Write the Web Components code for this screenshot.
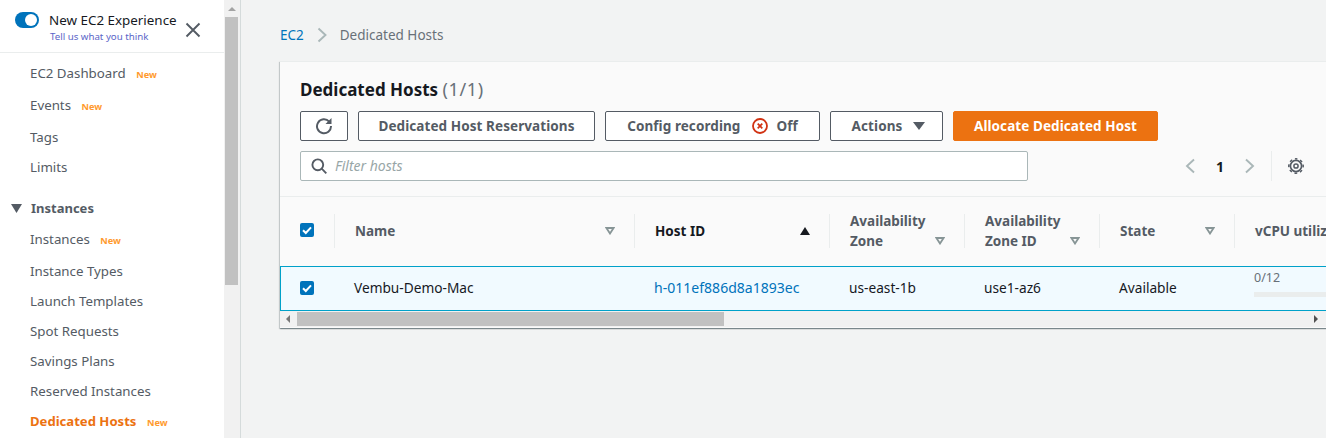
<!DOCTYPE html>
<html lang="en"><head><meta charset="utf-8"><title>Dedicated Hosts</title>
<style>
html,body{margin:0;height:438px;overflow:hidden;background:#f2f3f3;font-family:"Noto Sans","Open Sans",sans-serif;font-size:14px;color:#16191f}
</style></head><body>
<ec2-app>
  <side-nav slot="nav">
    <nav-item h="32" badge>EC2 Dashboard</nav-item>
    <nav-item h="32" badge>Events</nav-item>
    <nav-item h="31">Tags</nav-item>
    <nav-item h="30">Limits</nav-item>
    <nav-group>Instances</nav-group>
    <nav-item h="32" badge>Instances</nav-item>
    <nav-item h="31">Instance Types</nav-item>
    <nav-item h="30">Launch Templates</nav-item>
    <nav-item h="30">Spot Requests</nav-item>
    <nav-item h="30">Savings Plans</nav-item>
    <nav-item h="30">Reserved Instances</nav-item>
    <nav-item h="30" badge active>Dedicated Hosts</nav-item>
  </side-nav>
  <fake-scroll slot="scroll"></fake-scroll>
  <bread-crumb slot="main"></bread-crumb>
  <hosts-card slot="main"></hosts-card>
</ec2-app>
<script>
function def(name, css, html, extra){
  class C extends HTMLElement{
    constructor(){super();const r=this.attachShadow({mode:'open'});r.innerHTML='<style>'+css+'</style>'+(typeof html==='function'?html(this):html);}
    connectedCallback(){if(extra)extra(this);}
  }
  customElements.define(name,C);
}
def('ec2-app',`:host{display:flex;height:438px;overflow:hidden}
.nav{width:224px;flex:none;background:#fff}
.sb{width:16px;flex:none;background:#f1f1f1}
.main{flex:1;min-width:0;border-left:1px solid #d5dbdb;padding:0 0 0 39px;overflow:hidden}`,
`<div class="nav"><slot name="nav"></slot></div><div class="sb"><slot name="scroll"></slot></div><div class="main"><slot name="main"></slot></div>`);

def('side-nav',`:host{display:block}
.top{height:52px;border-bottom:1px solid #eaeded;display:flex;margin-bottom:4px}
.tog{width:24px;height:16px;border-radius:8px;background:#0073bb;margin:12px 0 0 15px;position:relative;flex:none}
.tog i{position:absolute;right:2px;top:2px;width:12px;height:12px;border-radius:50%;background:#fff}
.txt{margin:10px 0 0 10px;width:132px;flex:none}
.t1{font-size:13.4px;line-height:20px;color:#16191f;white-space:nowrap}
.t2{font-size:9.7px;line-height:13px;margin-left:1px;color:#5a65c8;white-space:nowrap}
svg{margin:22px 0 0 4px;flex:none}`,
`<div class="top"><div class="tog"><i></i></div><div class="txt"><div class="t1">New EC2 Experience</div><div class="t2">Tell us what you think</div></div><svg width="16" height="16" viewBox="0 0 16 16" fill="none" stroke="#545b64" stroke-width="1.9"><path d="M1.500 1.500l13 13M14.500 1.500l-13 13"/></svg></div><slot></slot>`);

def('nav-item',`:host{display:flex;align-items:center;gap:10.5px;padding-left:30px;font-size:13.3px;color:#545b64;white-space:nowrap;box-sizing:border-box}
:host([active]){color:#ec7211;font-weight:700;font-size:13.1px}
.n{font-size:9.2px;font-weight:700;color:#ff9a2e;margin-top:2px}`,
h=>`<slot></slot>${h.hasAttribute('badge')?'<span class="n">New</span>':''}`,
h=>{h.style.height=h.getAttribute('h')+'px'});

def('nav-group',`:host{display:flex;align-items:center;height:30px;margin-top:11px;padding-left:11px;font-size:13px;font-weight:700;color:#545b64}
svg{margin-right:9px}`,
`<svg width="11" height="9" viewBox="0 0 11 9"><path d="M0 0h11L5.500 9z" fill="#545b64"/></svg><slot></slot>`);

def('fake-scroll',`:host{display:block;height:438px;position:relative}
.u{width:0;height:0;border:4px solid transparent;border-bottom:4px solid #a3a3a3;border-top:0;position:absolute;left:4px;top:7px}
.th{position:absolute;left:1px;top:17px;width:13px;height:268px;background:#c1c1c1}`,
`<div class="u"></div><div class="th"></div>`);

def('bread-crumb',`:host{display:flex;align-items:center;height:61px;padding-top:8px;box-sizing:border-box;font-size:13.5px;color:#687078}
a{color:#0073bb;text-decoration:none}
svg{margin:0 13px 0 13px}`,
`<a href="#">EC2</a><svg width="10" height="16" viewBox="0 0 10 16" fill="none" stroke="#aab7b8" stroke-width="1.9"><path d="M1.500 1.500L8.500 8l-7 6.500"/></svg><span>Dedicated Hosts</span>`);

def('aws-btn',`:host{display:inline-flex;align-items:center;justify-content:center;height:30px;box-sizing:border-box;border:1px solid #545b64;border-radius:2px;background:#fff;color:#545b64;font-weight:700;font-size:13.5px;letter-spacing:.08px;white-space:nowrap;flex:none}
:host([primary]){background:#ec7211;border-color:#ec7211;color:#fff}`,`<slot></slot>`);

def('hosts-card',`:host{display:block;width:1100px;height:267px;box-sizing:border-box;background:#fafafa;box-shadow:0 1px 1px 0 rgba(0,28,36,.3),1px 1px 1px 0 rgba(0,28,36,.15),-1px 1px 1px 0 rgba(0,28,36,.15);border-top:1px solid #eaeded;position:relative}
.head{height:135px;padding:15px 0 0 20px;box-sizing:border-box;border-bottom:1px solid #eaeded}
h2{margin:0;font-size:17px;line-height:25px;font-weight:700;color:#16191f;white-space:nowrap}
h2 span{font-weight:400;color:#687078;font-size:18px;letter-spacing:.6px}
.bar{display:flex;gap:10px;margin-top:9px}
.off{display:inline-flex;margin:0 8px 0 12px}
.tri{margin-left:11px}
.tools{display:flex;align-items:center;margin-top:10px;height:30px}
.search{width:728px;height:30px;box-sizing:border-box;border:1px solid #aab7b8;border-radius:2px;background:#fff;display:flex;align-items:center;padding-left:10px;font-style:italic;color:#98a6a7;font-size:14px;flex:none}
.search svg{margin-right:8px}
.search span{margin-top:-2px}
.pg{display:flex;align-items:center;margin-left:156px;height:30px}
.num{text-align:center;font-weight:700;font-size:14px;margin:0 19px;width:10px;color:#16191f}
.div{width:1px;height:30px;background:#eaeded;margin:0 15px}
.grid{display:grid;grid-template-columns:55px 300px 195px 135px 135px 135px 200px}
.th{height:69px;box-sizing:border-box;padding:17px 0 18px}
.th>div{height:34px;box-sizing:border-box;border-right:1px solid #eaeded;padding:0 24px 0 20px;position:relative;display:flex;align-items:center;font-weight:700;font-size:13.5px;color:#545b64;line-height:20px;white-space:nowrap}
.th:nth-child(1)>div{padding:0 0 0 20px}
.th:nth-child(1) svg{margin-top:-2px}
.th:last-child>div{border:0}
.fi{position:absolute;right:19px;top:13px}
.fi.lo{top:23px}
.row{height:45px;box-sizing:border-box;border:1px solid #00a1c9;padding-bottom:2px;background:#f1faff;grid-column:1/-1;display:grid;grid-template-columns:54px 300px 195px 135px 135px 135px 200px;align-items:center;font-size:13.7px;color:#16191f}
.row>div{white-space:nowrap}
.row a{color:#0073bb;text-decoration:none;font-size:14.05px}
.cpu{font-size:12.5px;color:#687078;align-self:start;margin-top:2px;line-height:18px}
.cpu i{display:block;width:180px;height:5px;background:#eaeded;margin-top:5px}
.cb{width:14px;height:14px;display:block}
.hs{height:16px;background:#f1f1f1;position:relative}
.hs .l{position:absolute;left:6px;top:4px;width:0;height:0;border:4px solid transparent;border-right:4px solid #777;border-left:0}
.hs .t{position:absolute;left:17px;top:1px;width:427px;height:14px;background:#c1c1c1}
.hs .r{position:absolute;left:1034px;top:4px;width:0;height:0;border:4px solid transparent;border-left:4px solid #505050;border-right:0}`,
`<div class="head"><h2>Dedicated Hosts <span>(1/1)</span></h2>
<div class="bar">
<aws-btn style="width:48px"><svg width="18" height="18" viewBox="0 0 18 18" fill="none" stroke="#545b64" stroke-width="2"><path d="M14.200 4.600A7 7 0 1 0 16 9"/><path d="M16.500 1v6h-6z" fill="#545b64" stroke="none"/></svg></aws-btn>
<aws-btn style="width:237px">Dedicated Host Reservations</aws-btn>
<aws-btn style="width:215px">Config recording<svg class="off" width="16" height="16" viewBox="0 0 16 16" fill="none" stroke="#d13212"><circle cx="8" cy="8" r="7" stroke-width="1.800"/><path d="M5.700 5.700l4.600 4.600M10.300 5.700l-4.600 4.600" stroke-width="1.700"/></svg>Off</aws-btn>
<aws-btn style="width:113px;padding-left:4px">Actions<svg class="tri" width="12" height="8" viewBox="0 0 12 8"><path d="M0 0h12L6 8z" fill="#545b64"/></svg></aws-btn>
<aws-btn primary style="width:205px">Allocate Dedicated Host</aws-btn>
</div>
<div class="tools"><div class="search"><svg width="16" height="16" viewBox="0 0 16 16" fill="none" stroke="#545b64" stroke-width="1.900"><circle cx="6.800" cy="6.800" r="5.400"/><path d="M10.700 10.700l4.600 4.600"/></svg><span>Filter hosts</span></div>
<div class="pg"><svg width="12" height="16" viewBox="0 0 12 16" fill="none" stroke="#aab7b8" stroke-width="1.900"><path d="M10 1.500L3 8l7 6.500"/></svg><span class="num">1</span><svg width="12" height="16" viewBox="0 0 12 16" fill="none" stroke="#aab7b8" stroke-width="1.900"><path d="M2 1.500L9 8l-7 6.500"/></svg><span class="div"></span><svg width="18" height="18" viewBox="0 0 18 18" fill="none" stroke="#545b64"><circle cx="9" cy="9" r="2.100" stroke-width="1.500"/><circle cx="9" cy="9" r="5.600" stroke-width="1.700"/><circle cx="9" cy="9" r="7.200" stroke-width="1.500" stroke-dasharray="2.800 2.855" stroke-dashoffset="1.400" transform="rotate(-90 9 9)"/></svg></div></div></div>
<div class="grid">
<div class="th"><div><svg class="cb" viewBox="0 0 14 14"><rect width="14" height="14" rx="2" fill="#0073bb"/><path d="M3 7.200l2.800 2.800L11 4.300" fill="none" stroke="#fff" stroke-width="2"/></svg></div></div>
<div class="th"><div>Name<svg class="fi" width="10" height="8" viewBox="0 0 10 8" fill="none" stroke="#879596" stroke-width="1.800"><path d="M1.400 1h7.200L5 6.500z"/></svg></div></div>
<div class="th"><div style="color:#16191f">Host ID<svg class="fi" width="10" height="8" viewBox="0 0 10 8"><path d="M5 0l5 8H0z" fill="#16191f"/></svg></div></div>
<div class="th"><div>Availability<br>Zone<svg class="fi lo" width="10" height="8" viewBox="0 0 10 8" fill="none" stroke="#879596" stroke-width="1.800"><path d="M1.400 1h7.200L5 6.500z"/></svg></div></div>
<div class="th"><div>Availability<br>Zone ID<svg class="fi lo" width="10" height="8" viewBox="0 0 10 8" fill="none" stroke="#879596" stroke-width="1.800"><path d="M1.400 1h7.200L5 6.500z"/></svg></div></div>
<div class="th"><div>State<svg class="fi" width="10" height="8" viewBox="0 0 10 8" fill="none" stroke="#879596" stroke-width="1.800"><path d="M1.400 1h7.200L5 6.500z"/></svg></div></div>
<div class="th"><div>vCPU utilization</div></div>
<div class="row">
<div style="padding-left:19px;height:14px"><svg class="cb" viewBox="0 0 14 14"><rect width="14" height="14" rx="2" fill="#0073bb"/><path d="M3 7.200l2.800 2.800L11 4.300" fill="none" stroke="#fff" stroke-width="2"/></svg></div>
<div style="padding-left:19px">Vembu-Demo-Mac</div>
<div style="padding-left:19px"><a href="#">h-011ef886d8a1893ec</a></div>
<div style="padding-left:19px">us-east-1b</div>
<div style="padding-left:19px">use1-az6</div>
<div style="padding-left:19px">Available</div>
<div class="cpu" style="padding-left:19px">0/12<i></i></div>
</div></div>
<div class="hs"><span class="l"></span><span class="t"></span><span class="r"></span></div>`);
</script>
</body></html>
